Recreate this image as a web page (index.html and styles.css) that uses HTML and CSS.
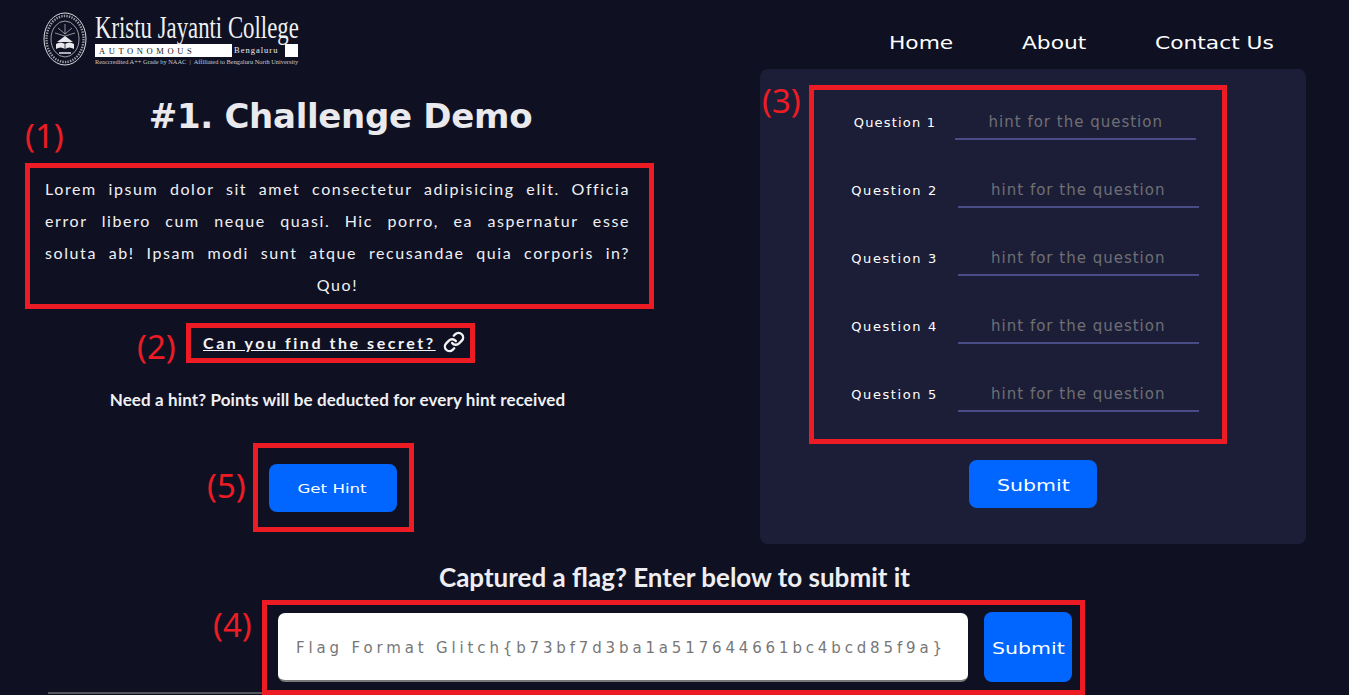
FILE: index.html
```html
<!DOCTYPE html>
<html lang="en">
<head>
    <meta charset="UTF-8">
    <meta name="viewport" content="width=device-width, initial-scale=1.0">
    <title>Challenge Demo</title>
    <link rel="stylesheet" href="styles.css">
</head>
<body>
    <div class="top">
        <div class="left">
            <div class="logo">
                <svg class="seal" viewBox="0 0 44 54" width="44" height="54" fill="none" stroke="#d8d8dc">
                    <ellipse cx="22" cy="27" rx="21" ry="26" stroke-width="1"/>
                    <ellipse cx="22" cy="27" rx="18.5" ry="23" stroke-width="2.4" stroke-dasharray="1.4 1.2" opacity="0.7"/>
                    <ellipse cx="22" cy="27" rx="14" ry="18" stroke-width="0.7"/>
                    <path d="M22 12v10M15 16l7 6 7-6M12 21l10 3 10-3" stroke-width="0.8" opacity="0.8"/>
                    <path d="M14 30l8-6 8 6z" fill="#e8e8ec" stroke="none"/>
                    <path d="M13 37c3-2 6-2 9 0 3-2 6-2 9 0v-5c-3-2-6-2-9 0-3-2-6-2-9 0z" fill="#e8e8ec" stroke="none"/>
                    <path d="M22 32v5" stroke="#0f1123" stroke-width="0.8"/>
                    <path d="M16 41h12" stroke-width="1.6"/>
                </svg>
                <div class="logo-text">
                    <div class="logo-name">Kristu Jayanti College</div>
                    <div class="logo-bar">
                        <span class="logo-auto">AUTONOMOUS</span>
                        <span class="logo-city">Bengaluru</span>
                    </div>
                    <div class="logo-sub">Reaccredited A++ Grade by NAAC &nbsp;|&nbsp; Affiliated to Bengaluru North University</div>
                </div>
            </div>

            <h1 class="title">#1. Challenge Demo</h1>

            <div class="marked desc">
                <span class="tag tag-1">(1)</span>
                Lorem ipsum dolor sit amet consectetur adipisicing elit. Officia error libero cum neque quasi. Hic porro, ea aspernatur esse soluta ab! Ipsam modi sunt atque recusandae quia corporis in? Quo!
            </div>

            <div class="marked secret">
                <span class="tag tag-2">(2)</span>
                <a href="#" class="secret-link">Can you find the secret?</a>
                <svg viewBox="0 0 24 24" width="22" height="22" fill="none" stroke="#f2f2f5" stroke-width="2.6" stroke-linecap="round" stroke-linejoin="round">
                    <path d="M10 13a5 5 0 0 0 7.54.54l3-3a5 5 0 0 0-7.07-7.07l-1.72 1.71"/>
                    <path d="M14 11a5 5 0 0 0-7.54-.54l-3 3a5 5 0 0 0 7.07 7.07l1.71-1.71"/>
                </svg>
            </div>

            <p class="hint-note">Need a hint? Points will be deducted for every hint received</p>

            <div class="marked hint-box">
                <span class="tag tag-5">(5)</span>
                <button class="btn btn-hint"><span class="wide">Get Hint</span></button>
            </div>
        </div>

        <div class="right">
            <nav class="nav">
                <a href="#">Home</a>
                <a href="#" class="nav-about">About</a>
                <a href="#" class="nav-contact">Contact Us</a>
            </nav>

            <div class="panel">
                <div class="marked questions">
                    <span class="tag tag-3">(3)</span>
                    <div class="q-row q-narrow"><label>Question 1</label><input type="text" placeholder="hint for the question"></div>
                    <div class="q-row"><label>Question 2</label><input type="text" placeholder="hint for the question"></div>
                    <div class="q-row"><label>Question 3</label><input type="text" placeholder="hint for the question"></div>
                    <div class="q-row"><label>Question 4</label><input type="text" placeholder="hint for the question"></div>
                    <div class="q-row"><label>Question 5</label><input type="text" placeholder="hint for the question"></div>
                </div>
                <button class="btn btn-panel"><span class="wide">Submit</span></button>
            </div>
        </div>
    </div>

    <h2 class="flag-title">Captured a flag? Enter below to submit it</h2>

    <div class="flag-wrap">
        <div class="flag-rule"></div>
        <div class="marked flag-box">
            <span class="tag tag-4">(4)</span>
            <input class="flag-input" type="text" placeholder="Flag Format Glitch{b73bf7d3ba1a517644661bc4bcd85f9a}">
            <button class="btn btn-flag"><span class="wide">Submit</span></button>
        </div>
    </div>
</body>
</html>
```

FILE: styles.css
```css
body {
    margin: 0;
    height: 695px;
    overflow: hidden;
    background: #0f1123;
    color: #f0f0f4;
    font-family: 'Lato', 'Open Sans', sans-serif;
}

.top {
    display: flex;
    height: 562px;
}

.left {
    width: 680px;
    flex-shrink: 0;
}

.right {
    flex: 1;
}

/* logo */
.logo {
    display: flex;
    align-items: center;
    gap: 8px;
    margin: 9px 0 0 43px;
    height: 60px;
}

.logo-text {
    width: 203px;
}

.logo-name {
    font-family: 'Liberation Serif', serif;
    font-size: 31px;
    line-height: 33px;
    white-space: nowrap;
    color: #f0f0f0;
    transform: scaleX(0.735);
    transform-origin: left;
}

.logo-bar {
    display: flex;
    height: 13px;
    background: #fff;
    align-items: center;
    justify-content: space-between;
    padding: 0 13px 0 4px;
    font-family: 'Liberation Serif', serif;
    font-size: 8.5px;
    color: #222;
}

.logo-auto {
    letter-spacing: 3.6px;
}

.logo-city {
    background: #0f1123;
    color: #eee;
    font-size: 8.5px;
    letter-spacing: 1px;
    width: 53px;
    padding-left: 2px;
    box-sizing: border-box;
    line-height: 13px;
    white-space: nowrap;
    overflow: hidden;
}

.logo-sub {
    font-family: 'Liberation Serif', serif;
    font-size: 6.4px;
    line-height: 10px;
    white-space: nowrap;
    color: #c8c8cc;
}

.title {
    margin: 25px 0 0;
    font-family: 'DejaVu Sans', sans-serif;
    font-size: 34px;
    font-weight: bold;
    line-height: 44px;
    letter-spacing: -0.3px;
    text-align: center;
    color: #e9e9ee;
    padding-left: 1px;
}

/* red annotation boxes from the screenshot */
.marked {
    position: relative;
    border: 5px solid #ed1c24;
    box-sizing: border-box;
}

.tag {
    position: absolute;
    font-family: 'Noto Sans', sans-serif;
    font-size: 33px;
    line-height: 40px;
    letter-spacing: 0;
    word-spacing: 0;
    color: #ed1c24;
}

.tag-1 { left: -5px; top: -52px; text-align-last: left; }
.tag-2 { left: -54px; top: -1px; }
.tag-3 { left: -52px; top: -9px; }
.tag-4 { left: -54px; top: 0; }
.tag-5 { left: -51px; top: 18px; }

.desc {
    width: 629px;
    height: 146px;
    margin: 25px 0 0 25px;
    padding: 5px 19px 4px 15px;
    font-size: 16px;
    line-height: 32px;
    letter-spacing: 1.6px;
    word-spacing: 5px;
    text-align: justify;
    text-align-last: center;
}

.secret {
    display: flex;
    align-items: center;
    width: 289px;
    height: 40px;
    margin: 14px 0 0 186px;
    padding: 0 0 2px 12px;
    gap: 7px;
}

.secret-link {
    color: #f4f4f6;
    font-size: 16px;
    font-weight: bold;
    letter-spacing: 2.55px;
}

.hint-note {
    margin: 27px 0 0;
    width: 675px;
    font-size: 17px;
    font-weight: bold;
    letter-spacing: 0.12px;
    line-height: 20px;
    text-align: center;
}

.hint-box {
    display: flex;
    align-items: center;
    justify-content: center;
    width: 161px;
    height: 89px;
    margin: 33px 0 0 253px;
    padding-right: 2px;
}

.btn {
    border: none;
    background: #0066ff;
    color: #fff;
    font-family: 'DejaVu Sans', sans-serif;
    cursor: pointer;
}

/* the button font in the shot is very wide, stretch it */
.wide {
    display: inline-block;
    transform: scaleX(1.28);
}

.btn-hint {
    width: 128px;
    height: 48px;
    padding-top: 2px;
    border-radius: 8px;
    font-size: 13px;
}

/* nav */
.nav {
    display: flex;
    justify-content: flex-end;
    height: 69px;
    padding: 33px 88px 0 0;
    box-sizing: border-box;
}

.nav a {
    color: #fff;
    text-decoration: none;
    font-family: 'DejaVu Sans', sans-serif;
    font-size: 17px;
    line-height: 20px;
    transform: scaleX(1.28);
}

.nav-about {
    margin-left: 83px;
}

.nav-contact {
    margin-left: 89px;
}

.panel {
    display: flex;
    flex-direction: column;
    width: 546px;
    height: 475px;
    margin-left: 80px;
    padding-top: 16px;
    box-sizing: border-box;
    background: #1c1e37;
    border-radius: 8px;
}

.questions {
    width: 418px;
    height: 359px;
    margin-left: 49px;
    padding: 14px 0 0 14px;
}

.q-row {
    display: flex;
    align-items: center;
    justify-content: center;
    gap: 20px;
    margin-bottom: 32px;
}

.q-row label {
    font-family: 'DejaVu Sans', sans-serif;
    font-size: 13px;
    letter-spacing: 1.6px;
    white-space: nowrap;
    color: #fff;
}

.q-narrow {
    gap: 19px;
}

.q-narrow label {
    letter-spacing: 1.2px;
}

.q-row input {
    width: 241px;
    height: 36px;
    box-sizing: border-box;
    padding: 2px 0 0;
    border: none;
    border-bottom: 2px solid #4a4c88;
    background: transparent;
    text-align: center;
    font-family: 'DejaVu Sans', sans-serif;
    font-size: 15px;
    letter-spacing: 1px;
}

.q-row input::placeholder {
    color: #6f6f75;
    opacity: 1;
}

.btn-panel {
    align-self: center;
    width: 128px;
    height: 48px;
    margin-top: 16px;
    padding-top: 4px;
    border-radius: 8px;
    font-size: 16px;
}

/* flag */
.flag-title {
    margin: 0;
    font-size: 26px;
    font-weight: bold;
    line-height: 30px;
    text-align: center;
    color: #eeeef2;
}

.flag-wrap {
    display: flex;
    align-items: flex-end;
    margin: 8px 0 0 48px;
    height: 95px;
}

.flag-rule {
    width: 214px;
    height: 2px;
    margin-bottom: 1px;
    background: #55565c;
}

.flag-box {
    display: flex;
    align-items: center;
    gap: 16px;
    width: 823px;
    height: 95px;
    padding: 0 8px 0 11px;
}

.flag-input {
    width: 690px;
    height: 69px;
    box-sizing: border-box;
    padding: 2px 18px 0;
    border: none;
    border-bottom: 2px solid #777;
    border-radius: 7px;
    background: #fff;
    font-family: 'DejaVu Sans', sans-serif;
    font-size: 15px;
    letter-spacing: 3.85px;
}

.flag-input::placeholder {
    color: #777;
    opacity: 1;
}

.btn-flag {
    width: 88px;
    height: 70px;
    margin-bottom: 2px;
    padding: 3px 0 0;
    border-radius: 8px;
    font-size: 16px;
}
```
